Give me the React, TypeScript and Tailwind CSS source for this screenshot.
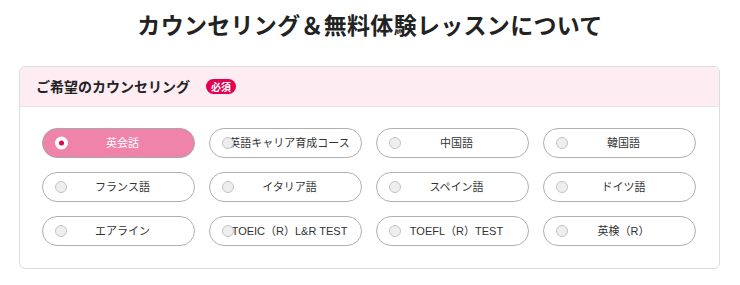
const courses = [
  '英会話',
  '英語キャリア育成コース',
  '中国語',
  '韓国語',
  'フランス語',
  'イタリア語',
  'スペイン語',
  'ドイツ語',
  'エアライン',
  'TOEIC（R）L&R TEST',
  'TOEFL（R）TEST',
  '英検（R）',
]

function CourseOption({ label, selected }: { label: string; selected: boolean }) {
  return (
    <label
      className={`relative flex h-[30px] items-center justify-center rounded-full border pl-[8px] text-[11px] [font-family:'Liberation_Sans','Noto_Sans_CJK_JP',sans-serif] ${
        selected ? 'border-[#a8a8a8] bg-[#f083a9] text-white' : 'border-[#b0b0b0] bg-white text-[#333]'
      }`}
    >
      {selected ? (
        <span className="absolute left-[12px] top-1/2 flex h-[13px] w-[13px] -translate-y-1/2 items-center justify-center rounded-full bg-white">
          <span className="h-[5px] w-[5px] rounded-full bg-[#e4004f]" />
        </span>
      ) : (
        <span className="absolute left-[12px] top-1/2 h-[12px] w-[12px] -translate-y-1/2 rounded-full border border-[#c4c4c4] bg-[#eeeeee]" />
      )}
      <span className="whitespace-nowrap">{label}</span>
    </label>
  )
}

export default function App() {
  return (
    <div className="w-[740px] bg-white pt-[8px] pb-[16px] text-[#222] [font-family:'Noto_Sans_CJK_JP','Noto_Sans',sans-serif]">
      {/* Title */}
      <h1 className="text-center text-[23px] font-bold leading-[32px] tracking-[0.3px]">
        カウンセリング＆無料体験レッスンについて
      </h1>

      {/* Card */}
      <section className="ml-[19px] mr-[20px] mt-[26px] overflow-hidden rounded-[6px] border border-[#dcdcdc]">
        <div className="flex h-[40px] items-center gap-[16px] border-b border-[#e6e6e6] bg-[#fdedf2] pl-[16px]">
          <h2 className="text-[14px] font-bold text-[#222]">ご希望のカウンセリング</h2>
          <span className="rounded-full bg-[#e5004f] px-[5px] text-[10px] font-bold leading-[15px] text-white">
            必須
          </span>
        </div>
        <div className="grid grid-cols-[repeat(4,153px)] gap-x-[14px] gap-y-[14px] px-[22px] pt-[21px] pb-[22px]">
          {courses.map((c, i) => (
            <CourseOption key={c} label={c} selected={i === 0} />
          ))}
        </div>
      </section>
    </div>
  )
}
